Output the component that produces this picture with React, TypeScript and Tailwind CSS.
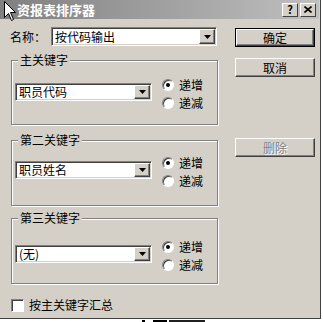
const font = { fontFamily: '"Noto Sans CJK SC", "Liberation Sans", sans-serif' };

function Combo({ value, width, height }: { value: string; width: string; height: string }) {
  return (
    <div
      className={`${width} ${height} flex bg-white border border-t-[#808080] border-l-[#808080] border-b-white border-r-white shadow-[inset_1px_1px_0_#404040,inset_-1px_-1px_0_#d4d0c8] p-[1px]`}
    >
      <div className="flex-1 flex items-center pl-[2px] text-[12px] leading-[14px] text-black whitespace-nowrap">
        {value}
      </div>
      <div className="w-[16px] h-full flex items-center justify-center bg-[#d4d0c8] border border-t-white border-l-white border-b-[#404040] border-r-[#404040] shadow-[inset_-1px_-1px_0_#808080]">
        <svg width="7" height="4" viewBox="0 0 7 4">
          <path d="M0 0h7L3.5 4z" fill="#000" />
        </svg>
      </div>
    </div>
  );
}

function Radio({ label, checked }: { label: string; checked?: boolean }) {
  return (
    <div className="h-[18px] flex items-center">
      <div className="w-[12px] h-[12px] rounded-full bg-white border border-t-[#808080] border-l-[#808080] border-b-white border-r-white shadow-[inset_1px_1px_0_#404040] flex items-center justify-center">
        {checked && <div className="w-[4px] h-[4px] rounded-full bg-black" />}
      </div>
      <span className="ml-[5px] text-[12px] leading-[14px] text-black">{label}</span>
    </div>
  );
}

function Btn({ label, primary, disabled }: { label: string; primary?: boolean; disabled?: boolean }) {
  return (
    <div className={`w-[80px] h-[19px] ${primary ? 'border border-black' : ''}`}>
      <div className="w-full h-full flex items-center justify-center bg-[#d4d0c8] border border-t-white border-l-white border-b-[#404040] border-r-[#404040] shadow-[inset_-1px_-1px_0_#808080]">
        <span
          className={`text-[12px] leading-[14px] ${disabled ? 'text-[#808080] [text-shadow:1px_1px_0_#fff]' : 'text-black'}`}
        >
          {label}
        </span>
      </div>
    </div>
  );
}

function Group({
  title,
  value,
  contentH,
  padTop,
}: {
  title: string;
  value: string;
  contentH: string;
  padTop: string;
}) {
  return (
    <fieldset className="ml-[1px] w-[207px] border border-[#808080] shadow-[inset_1px_1px_0_#fff,1px_1px_0_#fff]">
      <legend className="ml-[6px] px-[2px] bg-[#d4d0c8] text-[12px] leading-[14px] text-black">{title}</legend>
      <div className={`${contentH} ${padTop} pl-[3px] flex items-start`}>
        <div className="mt-[7px]">
          <Combo value={value} width="w-[137px]" height="h-[18px]" />
        </div>
        <div className="ml-[10px] flex flex-col">
          <Radio label="递增" checked />
          <Radio label="递减" />
        </div>
      </div>
    </fieldset>
  );
}

export default function App() {
  return (
    <div className="w-[323px] h-[322px] bg-white overflow-hidden relative" style={font}>
      <div className="w-[321px] h-[319px] bg-[#d4d0c8] border-r border-b border-[#404040] flex flex-col">
        <div className="w-[319px] h-[19px] bg-gradient-to-r from-[#808080] to-[#c0c0c0] flex items-center">
          <span className="ml-[17px] text-[13px] font-bold leading-none text-white">资报表排序器</span>
          <div className="ml-auto mr-[3px] flex">
            <div className="w-[16px] h-[14px] bg-[#d4d0c8] border border-t-white border-l-white border-b-[#404040] border-r-[#404040] flex items-center justify-center text-[11px] font-bold leading-none text-black">
              ?
            </div>
            <div className="ml-[2px] w-[16px] h-[14px] bg-[#d4d0c8] border border-t-white border-l-white border-b-[#404040] border-r-[#404040] flex items-center justify-center">
              <svg width="8" height="7" viewBox="0 0 8 7">
                <path d="M0.5 0.5L7.5 6.5M7.5 0.5L0.5 6.5" stroke="#000" strokeWidth="1.6" />
              </svg>
            </div>
          </div>
        </div>

        <div className="flex pl-[10px] pt-[8px]">
          <div className="w-[208px] flex flex-col">
            <div className="flex items-center">
              <span className="w-[41px] text-[12px] leading-[14px] text-black">名称：</span>
              <Combo value="按代码输出" width="w-[166px]" height="h-[19px]" />
            </div>

            <div className="mt-[7px]">
              <Group title="主关键字" value="职员代码" contentH="h-[57px]" padTop="pt-[9px]" />
            </div>
            <div className="mt-[8px]">
              <Group title="第二关键字" value="职员姓名" contentH="h-[58px]" padTop="pt-[7px]" />
            </div>
            <div className="mt-[5px]">
              <Group title="第三关键字" value="(无)" contentH="h-[58px]" padTop="pt-[13px]" />
            </div>

            <div className="mt-[14px] ml-[1px] flex items-center">
              <div className="w-[13px] h-[13px] bg-white border border-t-[#808080] border-l-[#808080] border-b-white border-r-white shadow-[inset_1px_1px_0_#404040]" />
              <span className="ml-[5px] text-[12px] leading-[14px] text-black">按主关键字汇总</span>
            </div>
          </div>

          <div className="ml-[17px] mt-[1px] flex flex-col">
            <Btn label="确定" primary />
            <div className="mt-[11px]">
              <Btn label="取消" />
            </div>
            <div className="mt-[61px]">
              <Btn label="删除" disabled />
            </div>
          </div>
        </div>
      </div>

      <div className="flex pl-[142px] pt-[1px] gap-[2px]">
        <div className="w-[3px] h-[2px] bg-black" />
        <div className="ml-[6px] w-[14px] h-[2px] bg-black" />
        <div className="w-[36px] h-[2px] bg-[#202020]" />
      </div>

      <svg className="absolute left-[4px] top-[1px]" width="12" height="20" viewBox="0 0 12 20">
        <path d="M0.5 0.5V16.5L4.5 12.5L7.5 19.5L9.5 18.5L6.5 11.5H11.5Z" fill="#fff" stroke="#000" strokeWidth="1" />
      </svg>
    </div>
  );
}
